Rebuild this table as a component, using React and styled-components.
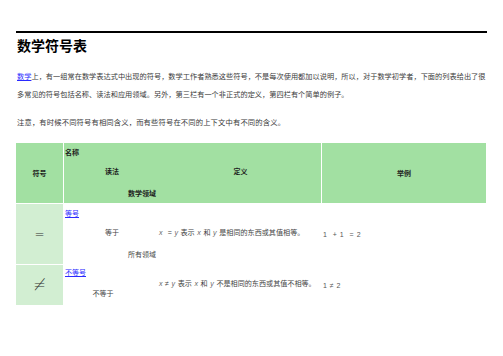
import React from 'react'
import styled, { createGlobalStyle } from 'styled-components'

const GlobalStyle = createGlobalStyle`
    body {
        margin: 0;
        background: #fff;
        font-family: "Liberation Sans", "Noto Sans CJK SC", sans-serif;
    }
`

const rows = [
    {
        symbol: '=',
        name: '等号',
        reading: '等于',
        def: ['x', '  = ', 'y', ' 表示 ', 'x', ' 和 ', 'y', ' 是相同的东西或其值相等。'],
        domain: '所有领域',
        example: '1  + 1  = 2',
        tall: true,
    },
    {
        symbol: '≠',
        name: '不等号',
        reading: '不等于',
        def: ['x', ' ≠ ', 'y', ' 表示 ', 'x', ' 和 ', 'y', ' 不是相同的东西或其值不相等。'],
        example: '1 ≠ 2',
        tall: false,
    },
]

function App() {
    return (
        <Page>
            <GlobalStyle />
            <Rule />
            <Title>数学符号表</Title>
            <Paragraph>
                <Link>数学</Link>上，有一组常在数学表达式中出现的符号，数学工作者熟悉这些符号，不是每次使用都加以说明，所以，对于数学初学者，下面的列表给出了很多常见的符号包括名称、读法和应用领域。另外，第三栏有一个非正式的定义，第四栏有个简单的例子。
            </Paragraph>
            <Note>注意，有时候不同符号有相同含义，而有些符号在不同的上下文中有不同的含义。</Note>
            <Table>
                <HeadCell $center>符号</HeadCell>
                <HeadCell>
                    <TopLine>名称</TopLine>
                    <MainLine>
                        <Reading>读法</Reading>
                        <Definition $center>定义</Definition>
                    </MainLine>
                    <Domain>数学领域</Domain>
                </HeadCell>
                <HeadCell $center>举例</HeadCell>

                {rows.map((r) => (
                    <React.Fragment key={r.name}>
                        <SymbolCell $big={!r.tall}>{r.symbol}</SymbolCell>
                        <NameCell>
                            <TopLine $short={!r.tall}>
                                <Link>{r.name}</Link>
                            </TopLine>
                            <MainLine $split={!r.tall}>
                                <Reading $low={!r.tall}>{r.reading}</Reading>
                                <Definition>
                                    {r.def.map((part, i) =>
                                        i % 2 === 0 && i < 7 ? <Var key={i}>{part}</Var> : <span key={i}>{part}</span>
                                    )}
                                </Definition>
                            </MainLine>
                            {r.domain && <Domain>{r.domain}</Domain>}
                        </NameCell>
                        <ExampleCell>{r.example}</ExampleCell>
                    </React.Fragment>
                ))}
            </Table>
        </Page>
    )
}

const Page = styled.div`
    padding: 31px 16px 0;
    color: #3a3a3a;
`

const Rule = styled.div`
    height: 2px;
    background: #000;
`

const Title = styled.h1`
    margin: 3px 0 0 1px;
    font-size: 14px;
    line-height: 20px;
    font-weight: bold;
    color: #000;
`

const Paragraph = styled.p`
    margin: 12px 0 0 1px;
    font-size: 7.2px;
    letter-spacing: 0.02px;
    line-height: 18px;
    width: 470px;
`

const Note = styled.p`
    margin: 10px 0 0 1px;
    font-size: 7.3px;
    letter-spacing: 0.15px;
    line-height: 18px;
`

const Link = styled.span`
    color: #2a2aff;
    text-decoration: underline;
    text-decoration-thickness: 1px;
    text-underline-offset: 1px;
`

const Table = styled.div`
    margin-top: 11px;
    width: 470px;
    display: grid;
    grid-template-columns: 47px 257px 164px;
    grid-template-rows: 60px 60px 40px;
    column-gap: 1px;
    row-gap: 1px;
    font-size: 7px;
`

const HeadCell = styled.div`
    background: #a2e0a2;
    color: #1e1e1e;
    font-weight: bold;
    display: flex;
    flex-direction: column;
    ${(p) => p.$center && 'align-items: center; justify-content: center;'}
`

const SymbolCell = styled.div`
    background: #d2eed2;
    color: #333;
    display: flex;
    align-items: center;
    justify-content: center;
    font-family: "DejaVu Sans", sans-serif;
    font-weight: 300;
    font-size: ${(p) => (p.$big ? '15px' : '12px')};
`

const NameCell = styled.div`
    display: flex;
    flex-direction: column;
    color: #444;
`

const ExampleCell = styled.div`
    display: flex;
    align-items: center;
    padding-left: 1px;
    color: #555;
    white-space: pre;
    word-spacing: 1px;
`

const TopLine = styled.div`
    height: ${(p) => (p.$short ? '14px' : '18px')};
    display: flex;
    align-items: center;
    padding-left: 1px;
`

const MainLine = styled.div`
    height: ${(p) => (p.$split ? '26px' : '22px')};
    display: grid;
    grid-template-columns: 96px 1fr;
    align-items: ${(p) => (p.$split ? 'start' : 'center')};
`

const Reading = styled.div`
    text-align: center;
    line-height: 10px;
    margin-top: ${(p) => (p.$low ? '10px' : '0')};
    padding-right: ${(p) => (p.$low ? '18px' : '0')};
`

const Definition = styled.div`
    line-height: 10px;
    white-space: pre;
    font-size: 7.1px;
    word-spacing: 0.6px;
    margin-left: -1px;
    ${(p) => p.$center && 'text-align: center; font-size: 7px; word-spacing: 0; margin-left: 0;'}
`

const Var = styled.em`
    font-style: italic;
    color: #666;
`

const Domain = styled.div`
    height: 20px;
    display: flex;
    align-items: center;
    padding-left: 64px;
`

export default App
